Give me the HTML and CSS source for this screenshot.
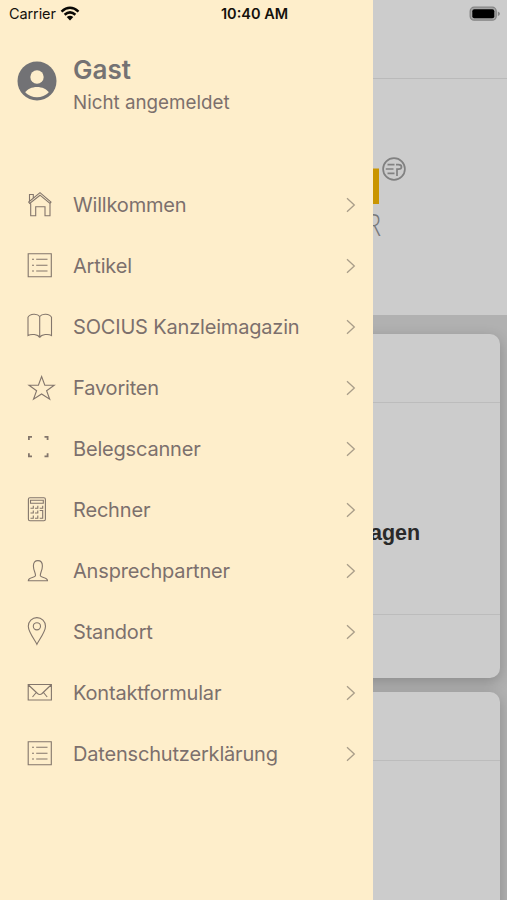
FILE: index.html
```html
<!DOCTYPE html>
<html lang="de">
<head>
<meta charset="utf-8">
<title>Menü</title>
<link rel="stylesheet" href="styles.css">
</head>
<body>
<div class="screen">
  <main class="page">
    <div class="navbar"></div>
    <div class="hero">
      <svg class="logo" width="60" height="90" viewBox="360 152 60 90">
        <path d="M360 204H379V168.500H373V192Q373 195 370 196H360Z" fill="#c99500"/>
        <circle cx="394" cy="169" r="10.900" fill="none" stroke="#818181" stroke-width="1.700"/>
        <path d="M387.500 164.700H394.500M385.800 169H393.500M387.500 173.300H394.500M397 176V169.200H398.500Q401.500 169.200 401.500 167T398.500 164.700H396" fill="none" stroke="#818181" stroke-width="1.700"/>
        <text class="logo-letter" x="365.500" y="236" textLength="15.500" lengthAdjust="spacingAndGlyphs">R</text>
      </svg>
    </div>
    <div class="feed">
      <section class="card">
        <div class="card-head"></div>
        <div class="card-body"><h2>agen</h2></div>
        <div class="card-foot"></div>
      </section>
      <section class="card card-next">
        <div class="card-head"></div>
        <div class="card-body"></div>
      </section>
    </div>
  </main>

  <aside class="drawer">
    <header class="profile">
      <svg class="avatar" width="40" height="40" viewBox="0 0 40 40">
        <circle cx="20" cy="20" r="19.500" fill="#727275"/>
        <circle cx="20" cy="16" r="6.700" fill="#feeecb"/>
        <path d="M8.300 31.500C10 28.200 15 26 20 26S30 28.200 31.700 31.500C28.500 34.700 24.500 36.200 20 36.200S11.500 34.700 8.300 31.500Z" fill="#feeecb"/>
      </svg>
      <div class="who">
        <h1>Gast</h1>
        <p>Nicht angemeldet</p>
      </div>
    </header>
    <nav class="menu">
      <a class="item"><svg class="icon" viewBox="0 0 40 40"><path d="M10.700 18.500V30.700H15.700V21.700H25V30.700H30V18.500M8.700 17L20 7.700L31 17L30 18.500L20 10.200L9.700 18.500ZM9.500 16.200V9.500H13.300V13"/></svg><span>Willkommen</span><svg class="chevron" viewBox="0 0 10 16"><path d="M1 1.300L8.300 8L1 14.700"/></svg></a>
      <a class="item"><svg class="icon" viewBox="0 0 40 40"><path d="M8.200 7.700H31.300V30.700H8.200ZM12 13.300H14M16.200 13.300H27.500M12 19.200H14M16.200 19.200H27.500M12 25H14M16.200 25H27.500"/></svg><span>Artikel</span><svg class="chevron" viewBox="0 0 10 16"><path d="M1 1.300L8.300 8L1 14.700"/></svg></a>
      <a class="item"><svg class="icon" viewBox="0 0 40 40"><path d="M19.700 30.500C18 27 11 26.800 8 28.500V10.200C10 6.500 17.500 6.200 19.700 9.500C22 6.200 29.500 6.500 31.500 10.200V28.500C28.500 26.800 21.500 27 19.700 30.500V9.500"/></svg><span>SOCIUS Kanzleimagazin</span><svg class="chevron" viewBox="0 0 10 16"><path d="M1 1.300L8.300 8L1 14.700"/></svg></a>
      <a class="item"><svg class="icon" viewBox="0 0 40 40"><path d="M21.600 8.500L24.800 17.300H34.200L26.600 22.800L29.700 31.200L21.600 26L13.500 31.200L16.600 22.800L9 17.300H18.400Z"/></svg><span>Favoriten</span><svg class="chevron" viewBox="0 0 10 16"><path d="M1 1.300L8.300 8L1 14.700"/></svg></a>
      <a class="item"><svg class="icon" viewBox="0 0 40 40"><path class="heavy" d="M8.900 11V7.900H12M24.500 7.900H27.600V11M8.900 24.200V27.300H12M24.500 27.300H27.600V24.200"/></svg><span>Belegscanner</span><svg class="chevron" viewBox="0 0 10 16"><path d="M1 1.300L8.300 8L1 14.700"/></svg></a>
      <a class="item"><svg class="icon" viewBox="0 0 40 40"><rect x="8.400" y="7.700" width="17" height="23" rx="1.500"/><path d="M10.500 10.200H23.300V13.200H10.500ZM10.500 18.300H13.300V15.800M15 18.300H17.800V15.800M19.700 18.300H22.700V15.800M10.500 23H13.300V20.500M15 23H17.800V20.500M19.700 20.500H22.700V28.300H19.700M10.500 28.300H13.300V25.500M15 28.300H17.800V25.500"/></svg><span>Rechner</span><svg class="chevron" viewBox="0 0 10 16"><path d="M1 1.300L8.300 8L1 14.700"/></svg></a>
      <a class="item"><svg class="icon" viewBox="0 0 40 40"><path d="M8.300 29.700C8.300 26 14.500 27 15.500 24.800C16 22.500 13.400 19.500 13.400 15C13.400 11.200 15.200 9.600 17.900 9.600S22.400 11.200 22.400 15C22.400 19.500 19.800 22.500 20.300 24.800C21.300 27 27.500 26 27.500 29.700Z"/></svg><span>Ansprechpartner</span><svg class="chevron" viewBox="0 0 10 16"><path d="M1 1.300L8.300 8L1 14.700"/></svg></a>
      <a class="item"><svg class="icon" viewBox="0 0 40 40"><path d="M16.900 32.300C15.500 29 8.300 20 8.300 14.200A8.600 8.600 0 0 1 25.500 14.200C25.500 20 18.300 29 16.900 32.300Z"/><circle cx="16.900" cy="14.300" r="3.600"/></svg><span>Standort</span><svg class="chevron" viewBox="0 0 10 16"><path d="M1 1.300L8.300 8L1 14.700"/></svg></a>
      <a class="item"><svg class="icon" viewBox="0 0 40 40"><path d="M8.200 11.500H31.400V27H8.200ZM8.500 12L17.500 20.500Q19.800 22.500 22.100 20.500L31 12M12.500 24L16.200 19.500M27.200 24L23.500 19.500"/></svg><span>Kontaktformular</span><svg class="chevron" viewBox="0 0 10 16"><path d="M1 1.300L8.300 8L1 14.700"/></svg></a>
      <a class="item"><svg class="icon" viewBox="0 0 40 40"><path d="M8.200 7.700H31.300V30.700H8.200ZM12 13.300H14M16.200 13.300H27.500M12 19.200H14M16.200 19.200H27.500M12 25H14M16.200 25H27.500"/></svg><span>Datenschutzerklärung</span><svg class="chevron" viewBox="0 0 10 16"><path d="M1 1.300L8.300 8L1 14.700"/></svg></a>
    </nav>
  </aside>

  <div class="status">
    <div class="carrier"><span>Carrier</span>
      <svg width="20" height="16" viewBox="0 0 20 16"><g fill="none" stroke="#090805" stroke-width="2.500"><path d="M1.500 5.600Q10 -2 18.500 5.600M4.600 8.700Q10 4 15.400 8.700"/></g><path d="M6.700 11.100Q10 8.500 13.300 11.100L10 14.400Z" fill="#090805"/></svg>
    </div>
    <time>10:40 AM</time>
    <svg class="battery" width="32" height="16" viewBox="0 0 32 16"><rect x="1.200" y="1.200" width="26" height="13" rx="4" fill="#a5a5a5" stroke="#858585" stroke-width="1.300"/><rect x="3.300" y="3.300" width="22" height="9" rx="2" fill="#000"/><path d="M28.800 5.500Q31 6.500 31 7.800T28.800 10.200Z" fill="#858585"/></svg>
  </div>
</div>
</body>
</html>
```
FILE: styles.css
```css
* { box-sizing: border-box; }
body, h1, h2, p { margin: 0; }
body { font-family: Inter, "Liberation Sans", sans-serif; }

.screen {
  position: relative;
  width: 507px;
  height: 900px;
  overflow: hidden;
  background: #cccccc;
}

.page { display: flex; flex-direction: column; height: 900px; }
.navbar { flex: none; height: 79px; border-bottom: 1px solid #bababa; }
.hero { flex: none; height: 236px; padding: 73px 0 0 360px; }
.logo { display: block; }
.logo-letter { font: 32px "Open Sans", sans-serif; font-weight: 300; fill: #777; }
.feed {
  flex: 1;
  min-height: 0;
  overflow: hidden;
  display: flex;
  flex-direction: column;
  gap: 14px;
  padding: 19px 7px 0 15px;
  background: #b1b1b1;
}
.card {
  height: 344px;
  flex: none;
  display: flex;
  flex-direction: column;
  border-radius: 10px;
  background: #cccccc;
  box-shadow: 0 4px 14px rgba(0, 0, 0, .22);
}
.card-next { height: 360px; }
.card-head { height: 69px; border-bottom: 1px solid #bcbcbc; }
.card-body { flex: 1; padding: 117px 0 0 355px; }
.card-body h2 {
  font: bold 21.500px/26px "Liberation Sans", sans-serif;
  color: #292929;
}
.card-foot { height: 64px; border-top: 1px solid #bcbcbc; }

.drawer {
  position: absolute;
  inset: 0 auto 0 0;
  width: 373px;
  background: #feeecb;
  color: #7c706d;
}
.profile { display: flex; gap: 16px; height: 174px; padding: 54px 0 0 17px; }
.avatar { margin-top: 7px; }
.who h1 { font-size: 26px; line-height: 32px; font-weight: 600; color: #747273; }
.who p { margin-top: 5px; font-size: 18.800px; line-height: 23px; }
.menu { display: flex; flex-direction: column; }
.item {
  display: flex;
  align-items: center;
  height: 61.050px;
  padding: 0 17px 0 20px;
  font-size: 20px;
  letter-spacing: -.18px;
}
.item span { margin-left: 13px; padding-top: 1px; flex: 1; white-space: nowrap; }
.icon { width: 40px; height: 40px; fill: none; stroke: #83766c; stroke-width: 1.100; }
.heavy { stroke-width: 1.800; }
.chevron { width: 10px; height: 16px; fill: none; stroke: #a99d89; stroke-width: 1.300; }

.status {
  position: absolute;
  inset: 0 0 auto 0;
  height: 27px;
  display: grid;
  grid-template-columns: 1fr auto 1fr;
  align-items: center;
  padding: 0 6px 0 9px;
  font-size: 14.500px;
  color: #14110c;
}
.carrier { display: flex; align-items: center; gap: 4px; letter-spacing: -.1px; }
.status time { font-weight: 600; margin-right: 1px; }
.battery { justify-self: end; }
```
